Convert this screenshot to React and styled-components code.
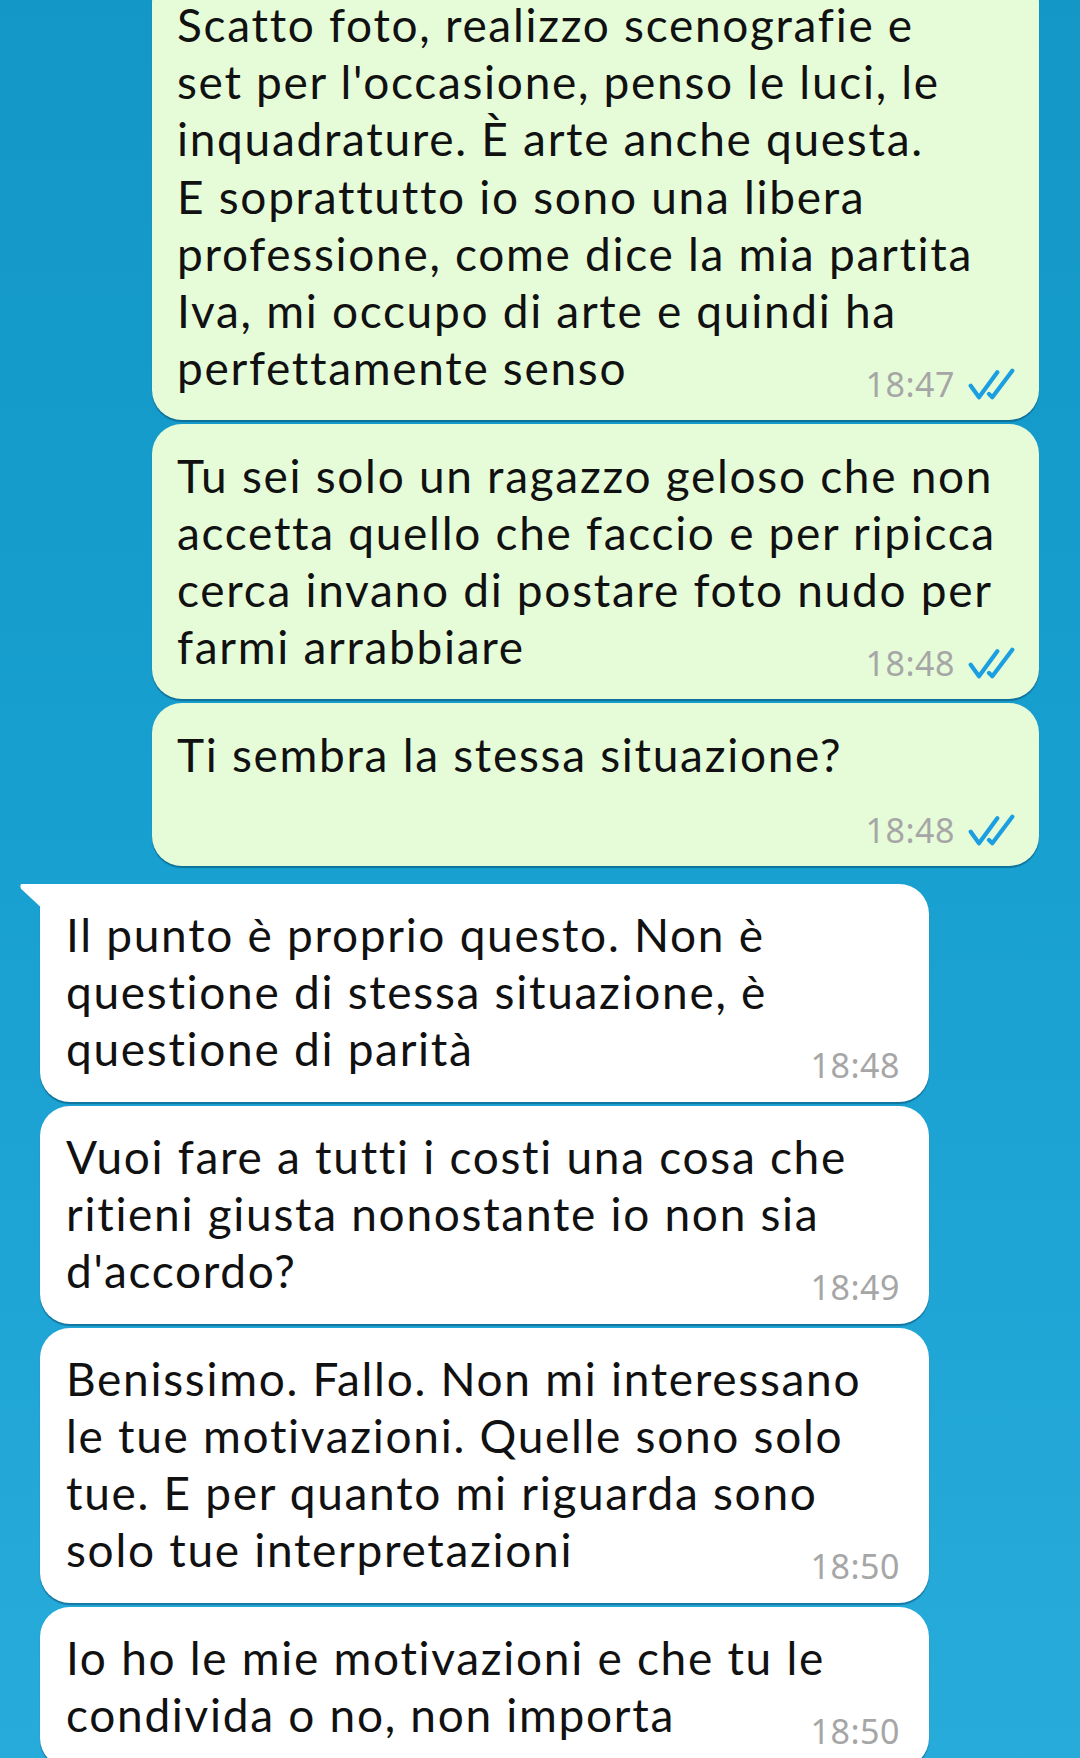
import React from "react";
import styled, { createGlobalStyle } from "styled-components";

const TextFont = `Lato, "Noto Sans", sans-serif`;
const TimeFont = `"Noto Sans", Roboto, sans-serif`;

const GlobalStyle = createGlobalStyle`
  html, body { margin: 0; padding: 0; }
  body {
    width: 1080px;
    height: 1758px;
    overflow: hidden;
    background: linear-gradient(180deg, #1397c6 0%, #179fcf 45%, #27abdb 100%);
  }
`;

const Chat = styled.div`
  display: flex;
  flex-direction: column;
  margin-top: -27px;
`;

const Group = styled.div`
  display: flex;
  flex-direction: column;
  gap: 4px;
  align-items: ${p => (p.$out ? "flex-end" : "flex-start")};
  padding: ${p => (p.$out ? "0 41px 0 0" : "0 0 0 40px")};
  & + & { margin-top: 18px; }
`;

const Bubble = styled.div`
  position: relative;
  box-sizing: border-box;
  width: ${p => (p.$out ? "887px" : "889px")};
  padding: ${p => (p.$out ? "23px 24px 18px 25px" : "22px 29px 19px 26px")};
  background: ${p => (p.$out ? "#e6fcd9" : "#ffffff")};
  border-radius: 30px;
  border-top-left-radius: ${p => (p.$tail ? "0" : "30px")};
  box-shadow: 0 2px 1px rgba(0, 60, 90, 0.45);

  ${p => p.$tail && `
    &::before {
      content: "";
      position: absolute;
      left: -20px;
      top: 0;
      width: 30px;
      height: 32px;
      background: #ffffff;
      clip-path: path("M3 0 H30 V32 L1 5 Q-1 0 3 0 Z");
    }
  `}
`;

const Text = styled.div`
  font-family: ${TextFont};
  font-size: 46px;
  line-height: 57.2px;
  letter-spacing: 1.7px;
  font-variant-ligatures: none;
  color: #111;
  white-space: nowrap;
`;

const Meta = styled.div`
  display: flex;
  justify-content: flex-end;
  align-items: center;
  gap: 12px;
  height: 36px;
  margin-top: ${p => (p.$inline ? "-30.6px" : "28.4px")};
`;

const Time = styled.span`
  font-family: ${TimeFont};
  font-size: 34px;
  color: #a6a6a6;
  letter-spacing: 0.5px;
`;

function Ticks() {
  return (
    <svg width="48" height="32" viewBox="0 0 48 32" fill="none">
      <path d="M3.7 17.7 L12 29.3 L30.3 4.3" stroke="#1c9fe0" strokeWidth="4.2" strokeLinecap="round" strokeLinejoin="round" />
      <path d="M22 26 L25.3 29.3 L45.3 2.7" stroke="#1c9fe0" strokeWidth="4.2" strokeLinecap="round" strokeLinejoin="round" />
    </svg>
  );
}

const outgoing = [
  {
    lines: [
      "Scatto foto, realizzo scenografie e",
      "set per l'occasione, penso le luci, le",
      "inquadrature. È arte anche questa.",
      "E soprattutto io sono una libera",
      "professione, come dice la mia partita",
      "Iva, mi occupo di arte e quindi ha",
      "perfettamente senso",
    ],
    time: "18:47",
    inline: true,
  },
  {
    lines: [
      "Tu sei solo un ragazzo geloso che non",
      "accetta quello che faccio e per ripicca",
      "cerca invano di postare foto nudo per",
      "farmi arrabbiare",
    ],
    time: "18:48",
    inline: true,
  },
  { lines: ["Ti sembra la stessa situazione?"], time: "18:48", inline: false },
];

const incoming = [
  {
    lines: [
      "Il punto è proprio questo. Non è",
      "questione di stessa situazione, è",
      "questione di parità",
    ],
    time: "18:48",
    inline: true,
  },
  {
    lines: [
      "Vuoi fare a tutti i costi una cosa che",
      "ritieni giusta nonostante io non sia",
      "d'accordo?",
    ],
    time: "18:49",
    inline: true,
  },
  {
    lines: [
      "Benissimo. Fallo. Non mi interessano",
      "le tue motivazioni. Quelle sono solo",
      "tue. E per quanto mi riguarda sono",
      "solo tue interpretazioni",
    ],
    time: "18:50",
    inline: true,
  },
  {
    lines: [
      "Io ho le mie motivazioni e che tu le",
      "condivida o no, non importa",
    ],
    time: "18:50",
    inline: true,
  },
];

function Message({ msg, out, tail }) {
  return (
    <Bubble $out={out} $tail={tail}>
      <Text>
        {msg.lines.map((l, i) => (
          <div key={i}>{l}</div>
        ))}
      </Text>
      <Meta $inline={msg.inline}>
        <Time>{msg.time}</Time>
        {out && <Ticks />}
      </Meta>
    </Bubble>
  );
}

export default function App() {
  return (
    <>
      <GlobalStyle />
      <Chat>
        <Group $out>
          {outgoing.map((m, i) => (
            <Message key={i} msg={m} out />
          ))}
        </Group>
        <Group>
          {incoming.map((m, i) => (
            <Message key={i} msg={m} tail={i === 0} />
          ))}
        </Group>
      </Chat>
    </>
  );
}
